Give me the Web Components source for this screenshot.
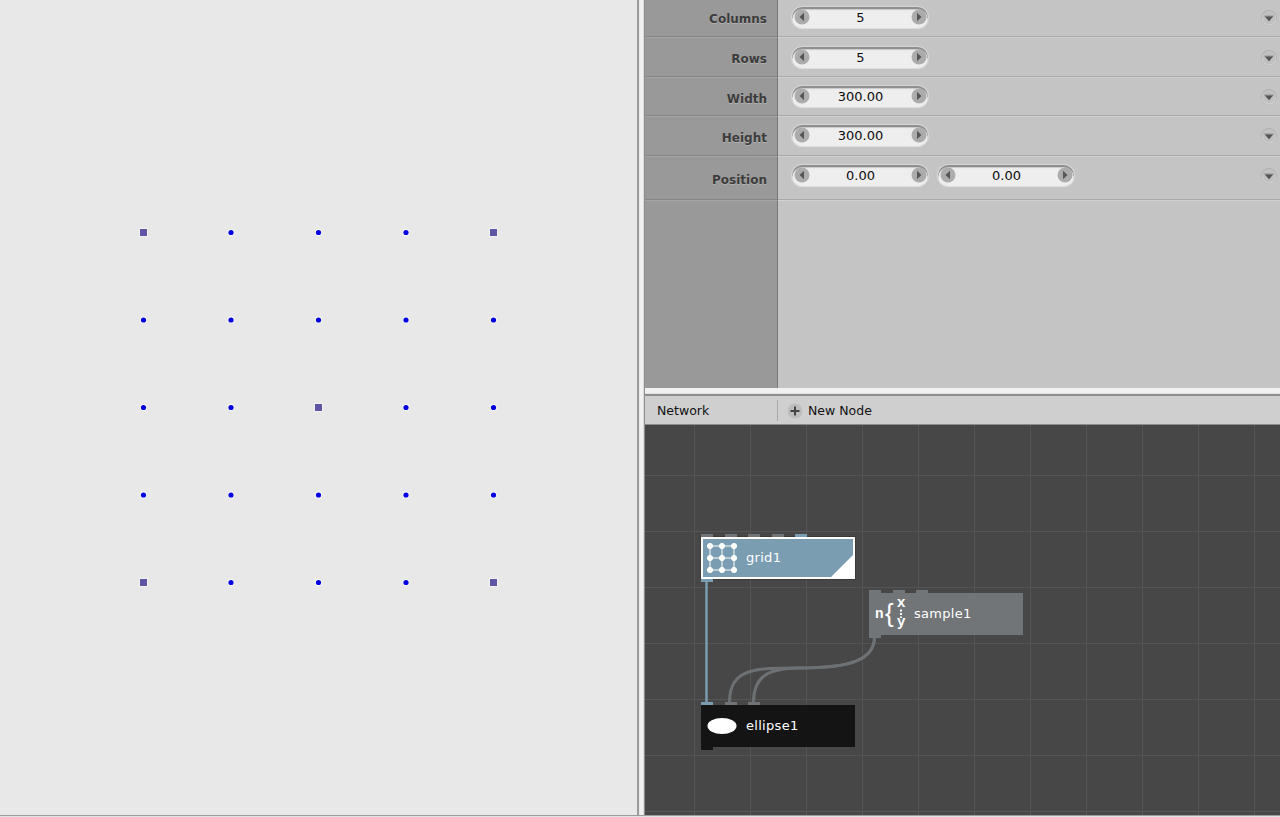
<!DOCTYPE html>
<html>
<head>
<meta charset="utf-8">
<title>Network</title>
<style>
html, body { margin: 0; height: 100%; overflow: hidden; background: #e8e8e8; }
</style>
</head>
<body>
<app-shell>
	<viewer-canvas slot="viewer" cols="5" rows="5"></viewer-canvas>
	<param-panel slot="params">
		<param-row label="Columns"><num-spinner value="5"></num-spinner></param-row>
		<param-row label="Rows"><num-spinner value="5"></num-spinner></param-row>
		<param-row label="Width" h="39" pad="8"><num-spinner value="300.00"></num-spinner></param-row>
		<param-row label="Height" pad="8"><num-spinner value="300.00"></num-spinner></param-row>
		<param-row label="Position" h="44" pad="8" last><num-spinner value="0.00"></num-spinner><num-spinner value="0.00"></num-spinner></param-row>
	</param-panel>
	<pane-header slot="header" title="Network" action="New Node"></pane-header>
	<network-view slot="network"></network-view>
</app-shell>

<script>
class AppShell extends HTMLElement {
	constructor() {
		super();
		this.attachShadow({ mode: 'open' });
		this.shadowRoot.innerHTML = `
<style>
:host { display: flex; flex-direction: column; width: 1280px; height: 817px; font-family: "DejaVu Sans", sans-serif; }
.main { display: flex; height: 815px; }
.left { width: 637px; flex: none; }
.vsplit {
	width: 8px; flex: none;
	background: linear-gradient(90deg, #9a9a9a 0 2px, #e9e9e9 2px 3px, #f1f1f1 3px 6px, #dcdcdc 6px 7px, #8e8e8e 7px 8px);
}
.right { flex: 1; display: flex; flex-direction: column; min-width: 0; }
.hsplit { height: 8px; flex: none; background: linear-gradient(180deg, #f1f1f1 0 5px, #e2e2e2 5px 6px, #8d8d8d 6px 8px); }
.foot { height: 2px; background: #e4e4e4; border-top: 1px solid #9c9c9c; box-sizing: border-box; }
</style>
<div class="main">
	<div class="left"><slot name="viewer"></slot></div>
	<div class="vsplit"></div>
	<div class="right">
		<slot name="params"></slot>
		<div class="hsplit"></div>
		<slot name="header"></slot>
		<slot name="network"></slot>
	</div>
</div>
<div class="foot"></div>`;
	}
}

class ViewerCanvas extends HTMLElement {
	constructor() {
		super();
		this.attachShadow({ mode: 'open' });
	}
	connectedCallback() {
		const cols = +this.getAttribute('cols');
		const rows = +this.getAttribute('rows');
		let marks = '';
		for (let r = 0; r < rows; r++) {
			for (let c = 0; c < cols; c++) {
				const x = 143.5 + c * 87.5;
				const y = 232.5 + r * 87.5;
				const corner = (r == 0 || r == rows - 1) && (c == 0 || c == cols - 1);
				const middle = r == 2 && c == 2;
				if (corner || middle) {
					marks += `<rect x="${x - 4.2}" y="${y - 4.2}" width="8.4" height="8.4" fill="#fff" opacity=".7"/>`;
					marks += `<rect x="${x - 3.5}" y="${y - 3.5}" width="7" height="7" fill="#5f55a5"/>`;
				} else {
					marks += `<circle cx="${x}" cy="${y}" r="3.4" fill="#fff" opacity=".8"/>`;
					marks += `<circle cx="${x}" cy="${y}" r="2.6" fill="#0000e0"/>`;
				}
			}
		}
		this.shadowRoot.innerHTML = `
<style>
:host { display: block; height: 100%; background: #e8e8e8; }
svg { display: block; }
</style>
<svg width="637" height="815">${marks}</svg>`;
	}
}

class ParamPanel extends HTMLElement {
	constructor() {
		super();
		this.attachShadow({ mode: 'open' });
		this.shadowRoot.innerHTML = `
<style>
:host { display: block; height: 388px; flex: none; overflow: hidden; background: linear-gradient(90deg, #999 0 132px, #777 132px 133px, #c4c4c4 133px); }
.list { margin-top: -2px; }
</style>
<div class="list"><slot></slot></div>`;
	}
}

class ParamRow extends HTMLElement {
	constructor() {
		super();
		this.attachShadow({ mode: 'open' });
		const h = this.getAttribute('h') || 40;
		const pad = this.getAttribute('pad') || 9;
		const last = this.hasAttribute('last');
		this.shadowRoot.innerHTML = `
<style>
:host { display: flex; height: ${h}px; box-sizing: border-box; }
.label {
	width: 133px; flex: none; box-sizing: border-box; padding: ${last ? 15 : 13}px 10px 0 0;
	text-align: right; font: bold 12px/16px "DejaVu Sans", sans-serif; color: #3c3c3c;
	text-shadow: 0 1px 0 rgba(255,255,255,.25);
	border-right: 1px solid #777;
	border-bottom: 1px solid #a6a6a6;
	box-shadow: inset 0 -1px 0 #868686;
}
.body {
	flex: 1; display: flex; gap: 10px; padding: ${pad}px 3px 0 14px; box-sizing: border-box;
	border-bottom: 1px solid #d0d0d0;
	box-shadow: inset 0 -1px 0 #a8a8a8;
}
.menu { margin-left: auto; margin-top: 3px; width: 16px; height: 16px; }
</style>
<div class="label">${this.getAttribute('label')}</div>
<div class="body">
	<slot></slot>
	<svg class="menu" viewBox="0 0 16 16">
		<circle cx="8" cy="8" r="7.9" fill="#aeaeae"/>
		<circle cx="8" cy="8.5" r="7.2" fill="#d2d2d2"/>
		<circle cx="8" cy="8" r="6.5" fill="#c0c0c0"/>
		<path d="M3.4 5.6h9.2v1H3.4z" fill="#8a8a8a"/>
		<path d="M3.8 6.6h8.4L8 11.2z" fill="#555"/>
	</svg>
</div>`;
	}
}

class NumSpinner extends HTMLElement {
	constructor() {
		super();
		this.attachShadow({ mode: 'open' });
		this.shadowRoot.innerHTML = `
<style>
:host {
	display: flex; align-items: center; justify-content: space-between;
	width: 136px; height: 21px; box-sizing: border-box; padding: 0 1px 0 2px; border-radius: 11px;
	background: #eeeeee;
	box-shadow: inset 0 2px 0 #8f8f8f, inset 0 3px 1px #c8c8c8, 0 1px 0 #dedede, 0 0 1px 1px #d8d8d8;
	font: 13px/21px "DejaVu Sans", sans-serif; color: #0c0c0c;
}
.btn { width: 16px; height: 16px; flex: none; margin-top: -1px; }
.val { flex: 1; text-align: center; }
</style>
<svg class="btn" viewBox="0 0 16 16"><circle cx="8" cy="8" r="7.5" fill="#acacac"/><path d="M5.5 8L10 3.8v8.4z" fill="#555"/></svg>
<span class="val">${this.getAttribute('value')}</span>
<svg class="btn" viewBox="0 0 16 16"><circle cx="8" cy="8" r="7.5" fill="#acacac"/><path d="M10.5 8L6 3.8v8.4z" fill="#555"/></svg>`;
	}
}

class PaneHeader extends HTMLElement {
	constructor() {
		super();
		this.attachShadow({ mode: 'open' });
		this.shadowRoot.innerHTML = `
<style>
:host {
	display: flex; align-items: center; height: 29px; flex: none; box-sizing: border-box; padding-top: 1px;
	background: #cfcfcf; border-bottom: 1px solid #8c8c8c;
	font: 12.5px/16px "DejaVu Sans", sans-serif; color: #111;
}
.title { width: 132px; box-sizing: border-box; padding-left: 12px; flex: none; }
.sep { width: 1px; height: 21px; background: #a8a8a8; flex: none; }
.plus { width: 16px; height: 16px; margin: 0 5px 0 9px; flex: none; }
</style>
<div class="title">${this.getAttribute('title')}</div>
<div class="sep"></div>
<svg class="plus" viewBox="0 0 16 16">
	<circle cx="8" cy="8" r="7.5" fill="#bdbdbd"/>
	<path d="M7 3.5h2V7h3.5v2H9v3.5H7V9H3.5V7H7z" fill="#444"/>
</svg>
<div>${this.getAttribute('action')}</div>`;
	}
}

class NetworkNode extends HTMLElement {
	constructor() {
		super();
		this.attachShadow({ mode: 'open' });
		const color = this.getAttribute('color');
		const ports = (this.getAttribute('ports') || '').split(',').filter(Boolean);
		const selected = this.hasAttribute('selected');
		const portBars = ports.map(p => `<i style="background:${p}"></i>`).join('');
		this.shadowRoot.innerHTML = `
<style>
:host {
	position: absolute; display: block; width: 154px; height: 42px;
	left: ${this.getAttribute('x')}px; top: ${this.getAttribute('y')}px;
	font: 13px/16px "DejaVu Sans", sans-serif; color: #fff; letter-spacing: .3px;
}
.ports { position: absolute; left: 0; top: -3px; display: flex; gap: 11.5px; z-index: 1; }
.ports i { display: block; width: 12px; height: 3px; }
.box {
	position: absolute; inset: 0; box-sizing: border-box; background: ${color};
	display: flex; align-items: center; padding-left: 4px;
	${selected ? 'border: 2px solid #fff; box-shadow: 0 0 0 1px #3a3a3a; padding-left: 3px;' : ''}
}
.icon { width: 32px; height: 36px; flex: none; display: flex; align-items: center; justify-content: center; }
.name { margin-left: 9px; ${selected ? 'margin-left: 8px;' : ''} }
.out { position: absolute; left: 0; bottom: -3px; width: 12px; height: 3px; background: ${this.getAttribute('out') || color}; z-index: 1; }
.fold { position: absolute; right: 0; bottom: 0; display: ${selected ? 'block' : 'none'}; }
</style>
<div class="ports">${portBars}</div>
<div class="box">
	<div class="icon"><slot name="icon"></slot></div>
	<div class="name">${this.getAttribute('name')}</div>
	<svg class="fold" width="22" height="22" viewBox="0 0 22 22"><path d="M22 0v22H0z" fill="#fff"/></svg>
</div>
<div class="out"></div>`;
	}
}

class NetworkView extends HTMLElement {
	constructor() {
		super();
		this.attachShadow({ mode: 'open' });
		const blue = '#7a9db2', port = '#707478';
		this.shadowRoot.innerHTML = `
<style>
:host {
	display: block; position: relative; flex: 1; overflow: hidden; background-color: #474747;
	background-image:
		linear-gradient(90deg, #555 1px, transparent 1px),
		linear-gradient(180deg, #555 1px, transparent 1px);
	background-size: 56px 56px;
	background-position: 49px 50px;
}
.wires { position: absolute; left: 0; top: 0; }
</style>
<svg class="wires" width="635" height="392" viewBox="645 425 635 392" fill="none">
	<path d="M706.5 582V702" stroke="${blue}" stroke-width="2.5"/>
	<path d="M874.5 637C874.5 660 850 668 800 668C755 668 729.5 668 729.5 702" stroke="#6d7173" stroke-width="3"/>
	<path d="M874.5 637C874.5 660 850 668 800 668C775 668 753.5 672 753.5 702" stroke="#6d7173" stroke-width="3"/>
</svg>
<network-node name="grid1" x="56" y="112" color="${blue}" out="${blue}" selected
	ports="${port},${port},${port},${port},${blue}">
	<svg slot="icon" width="32" height="32" viewBox="0 0 32 32" fill="#fff" stroke="#fff" stroke-width="1">
		<path d="M4 4H28V28H4zM4 16H28M16 4V28" fill="none"/>
		<circle cx="4" cy="4" r="2.6"/><circle cx="16" cy="4" r="2.6"/><circle cx="28" cy="4" r="2.6"/>
		<circle cx="4" cy="16" r="2.6"/><circle cx="16" cy="16" r="2.6"/><circle cx="28" cy="16" r="2.6"/>
		<circle cx="4" cy="28" r="2.6"/><circle cx="16" cy="28" r="2.6"/><circle cx="28" cy="28" r="2.6"/>
	</svg>
</network-node>
<network-node name="sample1" x="224" y="168" color="#717578" out="#717578"
	ports="#717578,#717578,#717578">
	<svg slot="icon" width="32" height="36" viewBox="0 0 32 36" fill="#fff" font-family="Liberation Sans" font-weight="bold" style="overflow:visible">
		<text x="2" y="22" font-size="14">n</text>
		<text x="12" y="25.5" font-size="26" font-weight="normal">{</text>
		<text x="24" y="11" font-size="15">x</text>
		<text x="24" y="30" font-size="15">y</text>
		<path d="M27 13.5h2v2h-2zM27 17h2v2h-2zM27 20.5h2v1.5h-2z"/>
	</svg>
</network-node>
<network-node name="ellipse1" x="56" y="280" color="#141414" out="#141414"
	ports="${blue},${port},${port}">
	<svg slot="icon" width="32" height="18" viewBox="0 0 32 18" style="margin-left:2px"><ellipse cx="16" cy="9" rx="15.5" ry="8.5" fill="#fff"/></svg>
</network-node>`;
	}
}

customElements.define('app-shell', AppShell);
customElements.define('viewer-canvas', ViewerCanvas);
customElements.define('param-panel', ParamPanel);
customElements.define('param-row', ParamRow);
customElements.define('num-spinner', NumSpinner);
customElements.define('pane-header', PaneHeader);
customElements.define('network-node', NetworkNode);
customElements.define('network-view', NetworkView);
</script>
</body>
</html>
